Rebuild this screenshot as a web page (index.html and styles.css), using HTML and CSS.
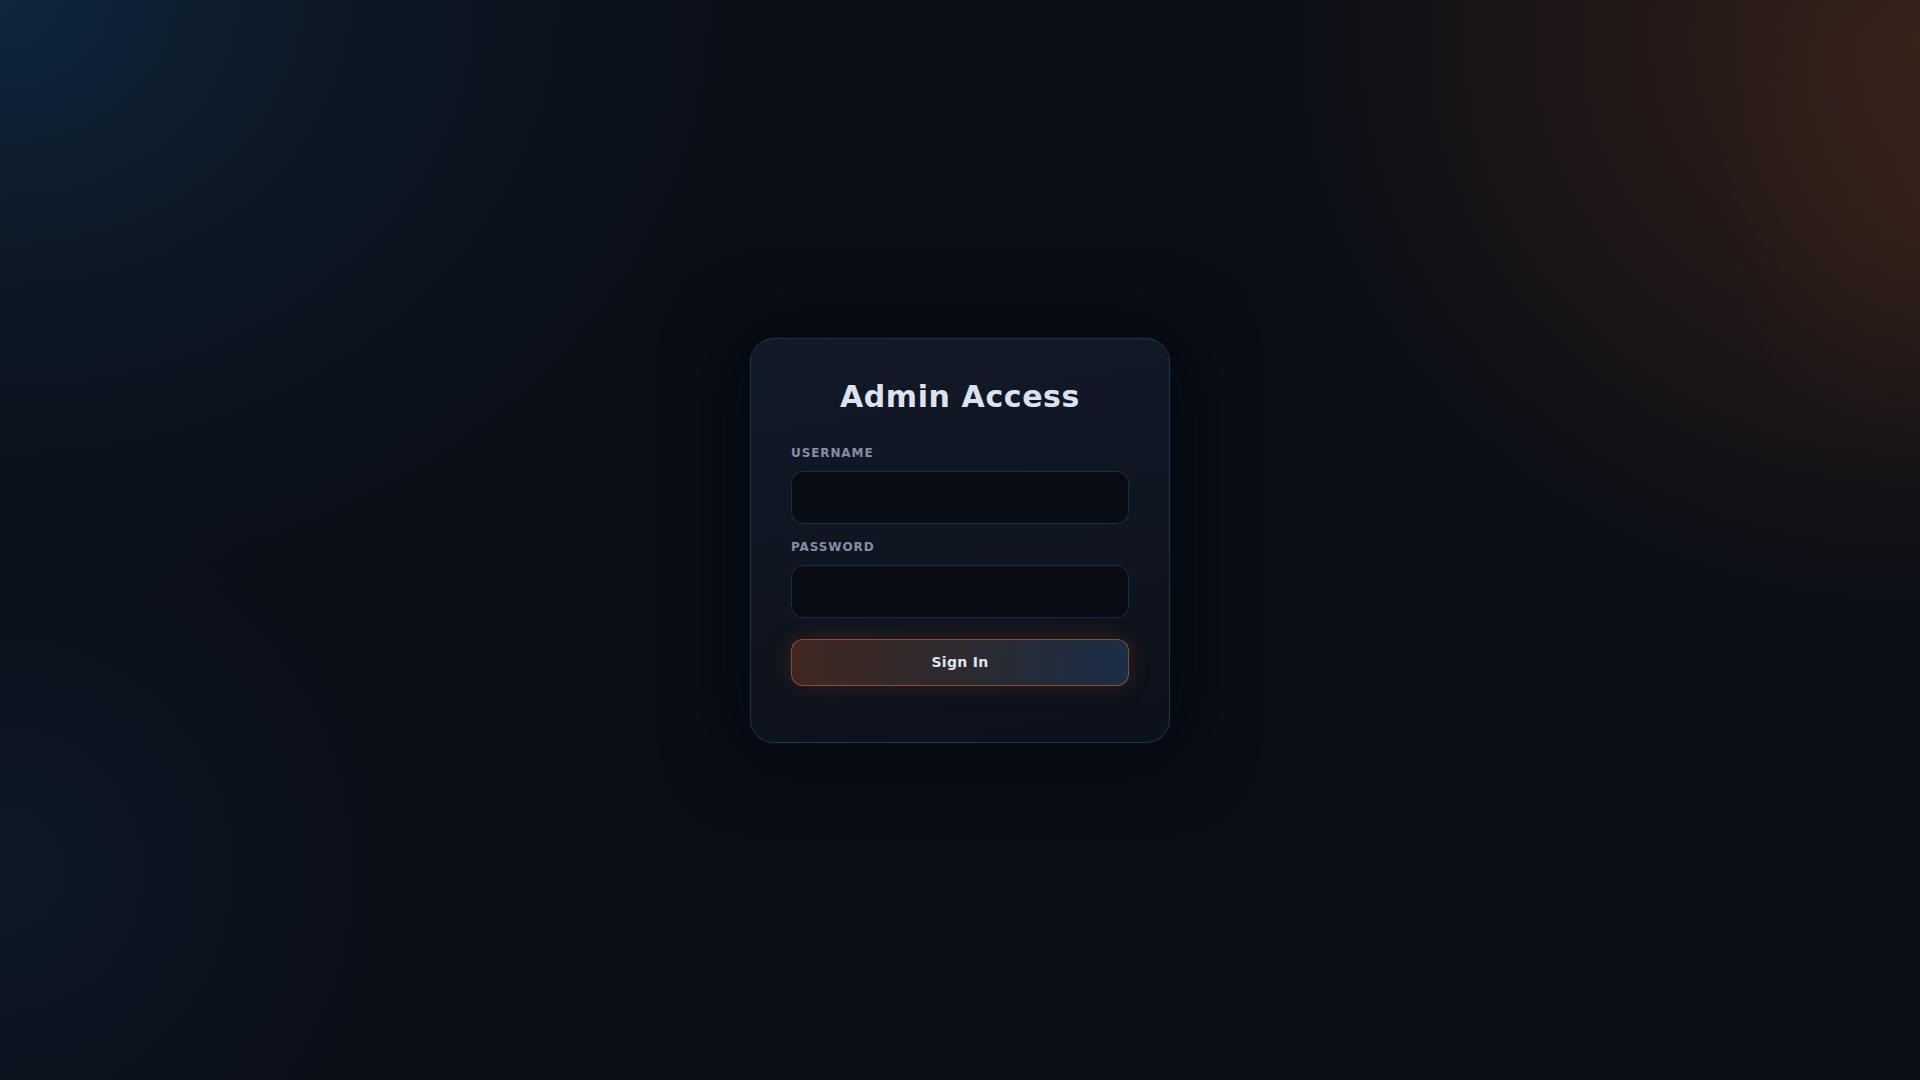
FILE: index.html
```html
<!DOCTYPE html>
<html lang="en">
<head>
<meta charset="utf-8">
<title>Admin Access</title>
<link rel="stylesheet" href="styles.css">
</head>
<body>
<main class="page">
  <section class="card">
    <h1 class="title">Admin Access</h1>
    <form class="form" onsubmit="return false">
      <div class="field">
        <label class="label" for="username">USERNAME</label>
        <input class="input" id="username" type="text" autocomplete="off">
      </div>
      <div class="field">
        <label class="label" for="password">PASSWORD</label>
        <input class="input" id="password" type="password">
      </div>
      <button class="btn" type="submit">Sign In</button>
    </form>
  </section>
</main>
</body>
</html>
```
FILE: styles.css
```css
* { box-sizing: border-box; }
html, body { margin: 0; height: 100%; }
body {
  font-family: "DejaVu Sans", "Liberation Sans", sans-serif;
  background-color: #0a0e17;
  background-image:
    radial-gradient(circle 400px at 0 870px, rgba(18, 34, 56, 0.5), rgba(18, 34, 56, 0) 100%),
    radial-gradient(ellipse 200px 260px at 1920px 200px, rgba(62, 38, 26, 0.5), rgba(62, 38, 26, 0) 100%),
    radial-gradient(ellipse 660px 600px at 1920px 40px, rgba(54, 34, 26, 1) 0%, rgba(42, 27, 23, 0.75) 45%, rgba(30, 22, 22, 0) 100%),
    radial-gradient(ellipse 760px 620px at 0 0, rgba(15, 38, 60, 1) 0%, rgba(14, 30, 46, 0.6) 45%, rgba(10, 20, 34, 0) 100%);
  color: #dbe2ee;
}
.page {
  min-height: 100vh;
  display: flex;
  align-items: center;
  justify-content: center;
}
.card {
  width: 420px;
  padding: 40px 40px 56px;
  border: 1px solid #1b3450;
  border-radius: 24px;
  background: linear-gradient(170deg, #121928 0%, #0f1420 60%, #0c111b 100%);
  box-shadow: 0 0 0 1px rgba(20, 50, 80, 0.15), 0 4px 70px 14px rgba(2, 4, 8, 0.55);
}
.title {
  margin: 0 0 32px;
  text-align: center;
  font-size: 30px;
  font-weight: 700;
  line-height: normal;
  letter-spacing: 0.6px;
  color: #dce3ee;
}
.form {
  display: flex;
  flex-direction: column;
}
.field {
  display: flex;
  flex-direction: column;
  margin-bottom: 16px;
}
.field + .field { margin-bottom: 21px; }
.label {
  font-size: 12px;
  font-weight: 700;
  letter-spacing: 0.9px;
  line-height: normal;
  color: #8390a6;
  margin-bottom: 11px;
}
.input {
  height: 53px;
  width: 100%;
  border: 1px solid #173049;
  border-radius: 12px;
  background: #0a0c13;
  color: #dce3ee;
  font: inherit;
  font-size: 16px;
  padding: 0 16px;
  outline: none;
}
.btn {
  height: 47px;
  width: 100%;
  border: 1px solid rgba(214, 108, 52, 0.55);
  border-radius: 12px;
  background: linear-gradient(100deg, #40271f 0%, #2d2a30 50%, #1a2e47 100%);
  color: #dfe5ef;
  font-family: inherit;
  font-size: 14px;
  font-weight: 700;
  letter-spacing: 0.3px;
  box-shadow: 0 0 22px rgba(190, 85, 35, 0.22);
  cursor: pointer;
}
```
